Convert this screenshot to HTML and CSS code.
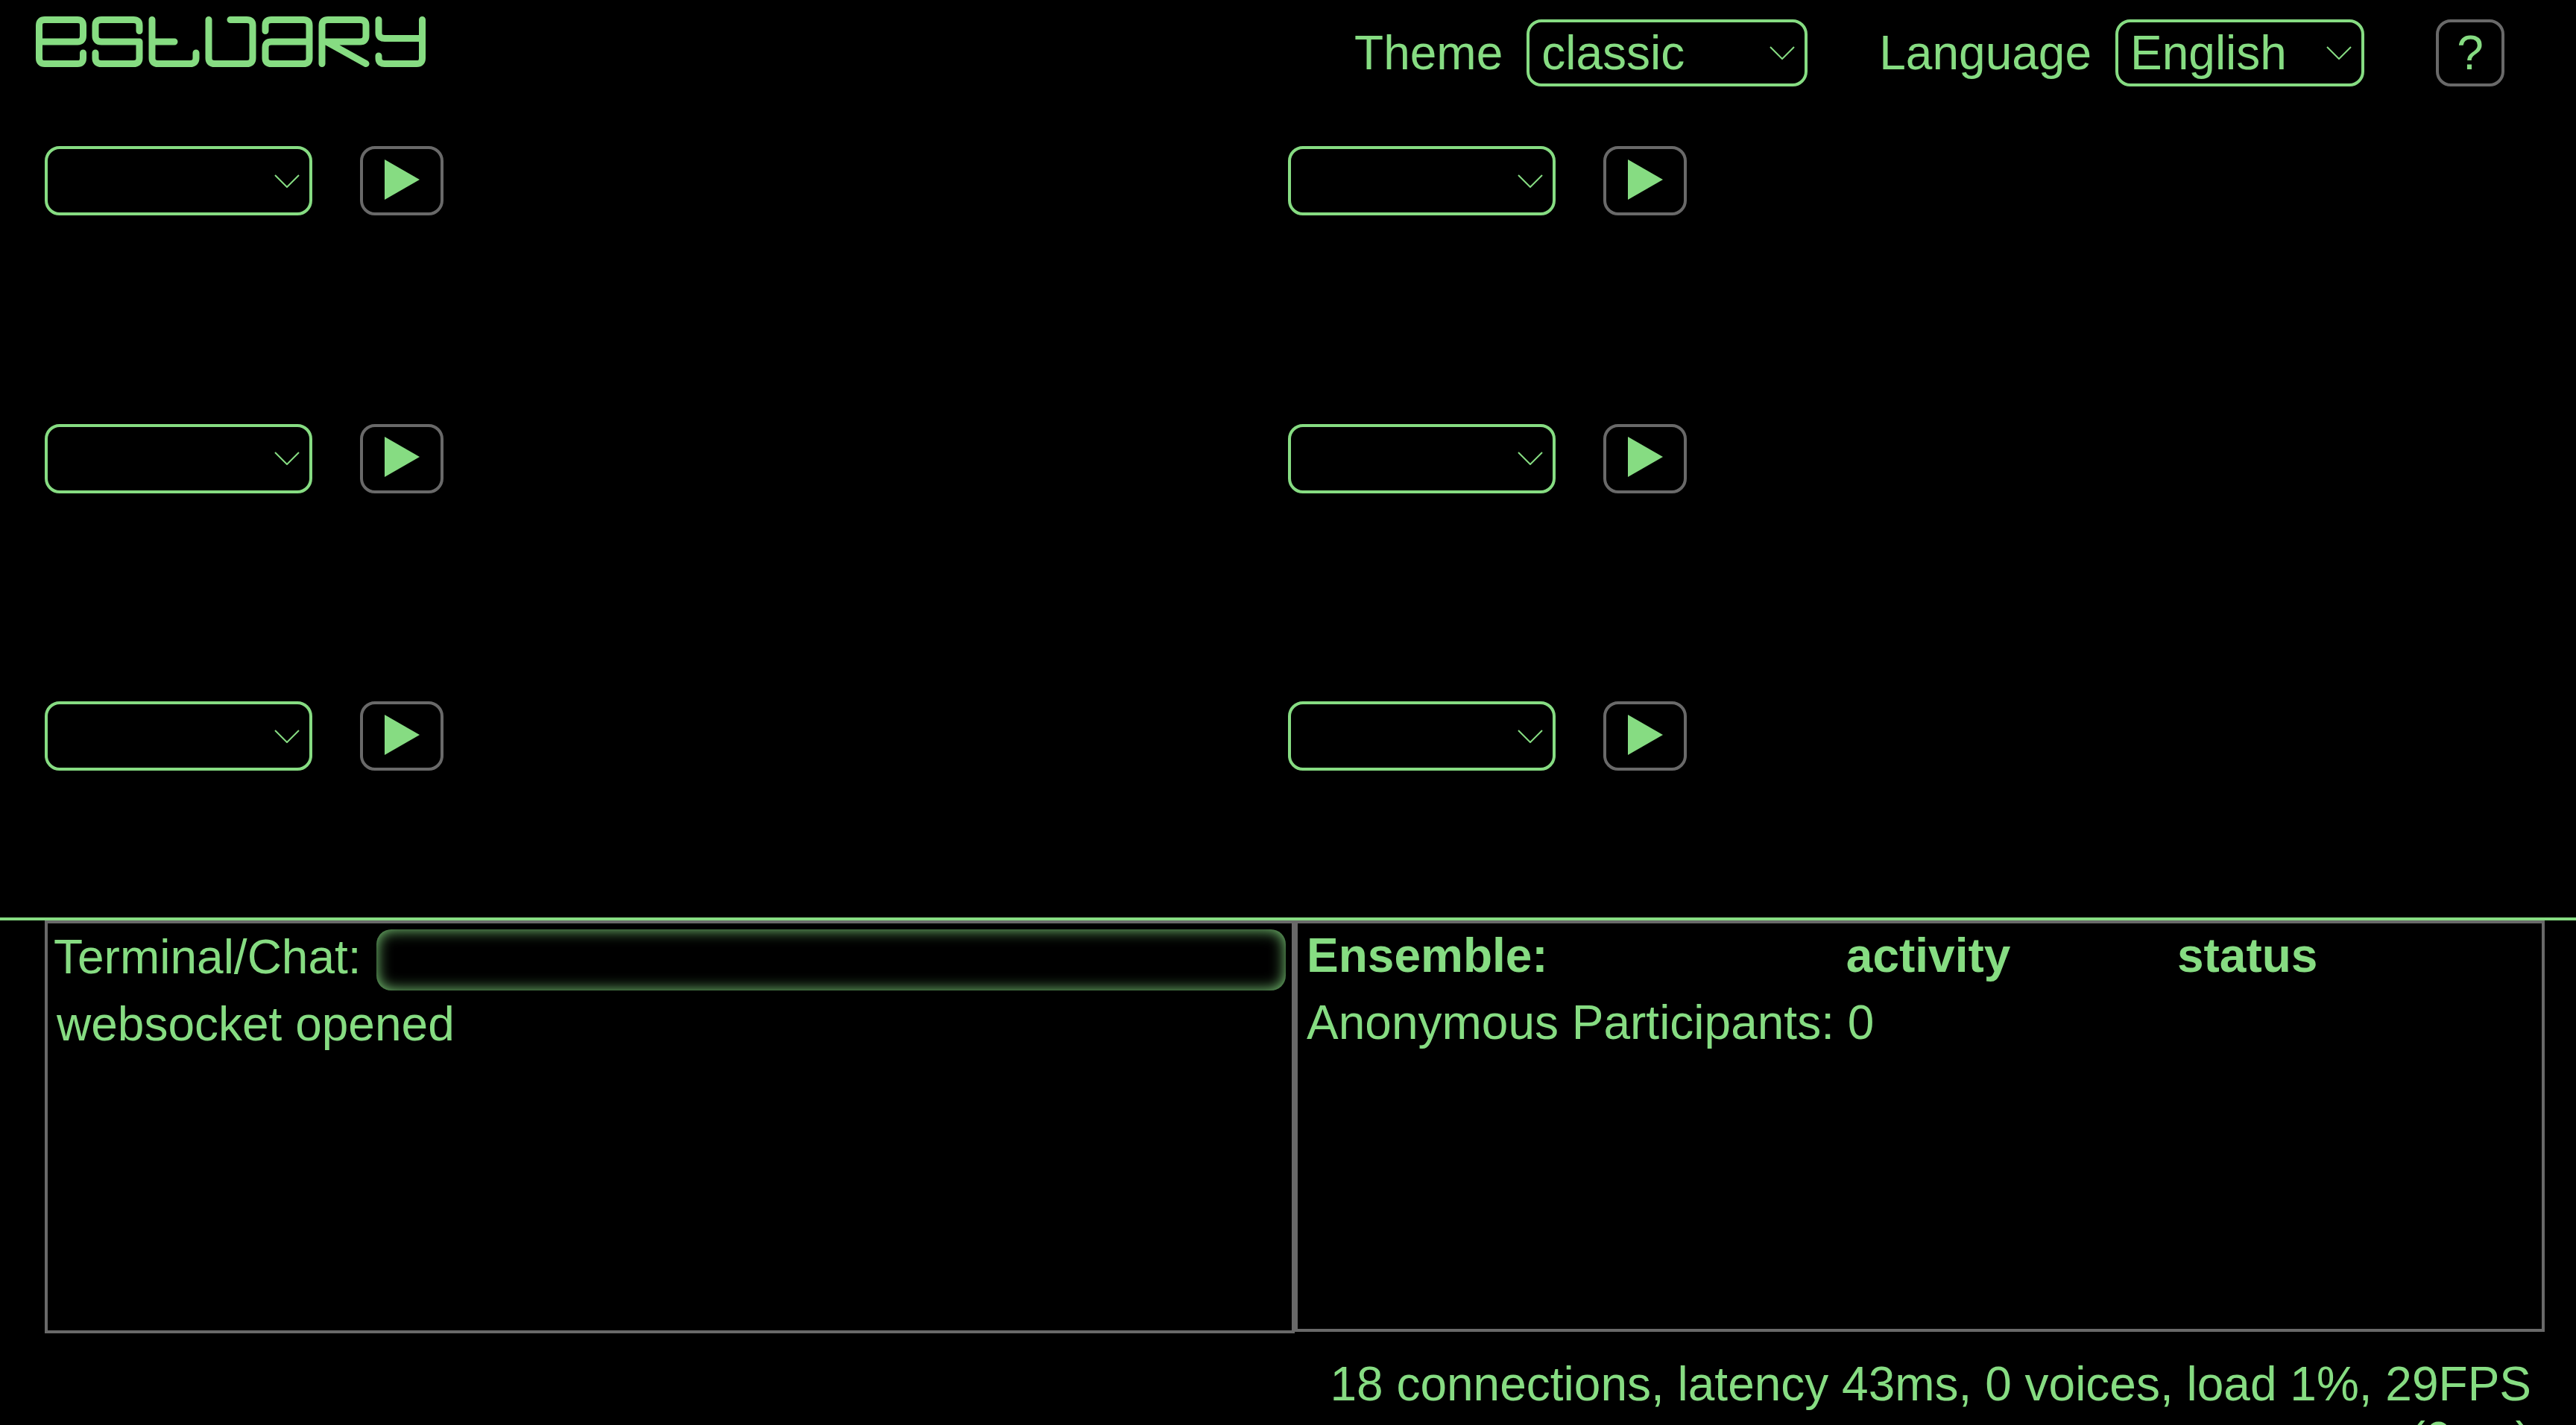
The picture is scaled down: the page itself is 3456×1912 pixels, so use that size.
FILE: index.html
```html
<!DOCTYPE html>
<html lang="en">
<head>
<meta charset="utf-8">
<title>Estuary</title>
<link rel="stylesheet" href="styles.css">
</head>
<body>
<div class="page">
  <header class="header">
    <svg class="logo" viewBox="0 0 523 68" role="img" aria-label="estuary">
      <path d="M4.500 34H56Q63.500 34 63.500 26V12Q63.500 4.500 56 4.500H12Q4.500 4.500 4.500 12V56Q4.500 63.500 12 63.500H56Q63.500 63.500 63.500 56V49"/>
      <path d="M139 19.500V12Q139 4.500 131 4.500H88Q80 4.500 80 12V26Q80 34 88 34H139V56Q139 63.500 131 63.500H88Q80 63.500 80 56V49"/>
      <path d="M156 4.500V56Q156 63.500 164 63.500H207Q215 63.500 215 56V49M156 34H186"/>
      <path d="M232 4.500V56Q232 63.500 240 63.500H283Q291 63.500 291 56V12Q291 4.500 283 4.500H261"/>
      <path d="M308 19.500V12Q308 4.500 316 4.500H359Q367 4.500 367 12V56Q367 63.500 359 63.500H316Q308 63.500 308 56V42Q308 34 316 34H367"/>
      <path d="M384 63.500V12Q384 4.500 392 4.500H435Q443 4.500 443 12V26Q443 34 435 34H384M390 34L443 63.500"/>
      <path d="M460 4.500V22Q460 29.500 468 29.500H518.500M518.500 4.500V56Q518.500 63.500 511 63.500H468Q460 63.500 460 56V53"/>
    </svg>
    <div class="config">
      <div class="field">
        <label for="theme">Theme</label>
        <select id="theme" class="select select-theme"><option>classic</option></select>
      </div>
      <div class="field">
        <label for="language">Language</label>
        <select id="language" class="select select-language"><option>English</option></select>
      </div>
      <button class="button button-help" type="button">?</button>
    </div>
  </header>

  <main class="grid">
    <section class="cell">
      <select class="select select-notation" aria-label="Notation 1"><option></option></select>
      <button class="button button-play" type="button" aria-label="Evaluate 1"><svg class="play" viewBox="0 0 47 54"><path d="M0 0L47 27L0 54Z"/></svg></button>
    </section>
    <section class="cell">
      <select class="select select-notation" aria-label="Notation 2"><option></option></select>
      <button class="button button-play" type="button" aria-label="Evaluate 2"><svg class="play" viewBox="0 0 47 54"><path d="M0 0L47 27L0 54Z"/></svg></button>
    </section>
    <section class="cell">
      <select class="select select-notation" aria-label="Notation 3"><option></option></select>
      <button class="button button-play" type="button" aria-label="Evaluate 3"><svg class="play" viewBox="0 0 47 54"><path d="M0 0L47 27L0 54Z"/></svg></button>
    </section>
    <section class="cell">
      <select class="select select-notation" aria-label="Notation 4"><option></option></select>
      <button class="button button-play" type="button" aria-label="Evaluate 4"><svg class="play" viewBox="0 0 47 54"><path d="M0 0L47 27L0 54Z"/></svg></button>
    </section>
    <section class="cell">
      <select class="select select-notation" aria-label="Notation 5"><option></option></select>
      <button class="button button-play" type="button" aria-label="Evaluate 5"><svg class="play" viewBox="0 0 47 54"><path d="M0 0L47 27L0 54Z"/></svg></button>
    </section>
    <section class="cell">
      <select class="select select-notation" aria-label="Notation 6"><option></option></select>
      <button class="button button-play" type="button" aria-label="Evaluate 6"><svg class="play" viewBox="0 0 47 54"><path d="M0 0L47 27L0 54Z"/></svg></button>
    </section>
  </main>

  <div class="terminal">
    <section class="panel chat">
      <div class="chat-entry">
        <label for="chat">Terminal/Chat:</label>
        <input id="chat" class="chat-input" type="text">
      </div>
      <p class="chat-message">websocket opened</p>
    </section>
    <section class="panel ensemble">
      <table class="ensemble-table">
        <thead>
          <tr><th class="col-name">Ensemble:</th><th class="col-activity">activity</th><th>status</th></tr>
        </thead>
        <tbody>
          <tr><td colspan="3">Anonymous Participants: 0</td></tr>
        </tbody>
      </table>
    </section>
  </div>

  <footer class="footer">
    <div>18 connections, latency 43ms, 0 voices, load 1%, 29FPS</div>
    <div>(0ms)</div>
  </footer>
</div>
</body>
</html>
```
FILE: styles.css
```css
:root {
  --green: #86dc82;
  --grey: #696969;
}

* {
  box-sizing: border-box;
}

body {
  margin: 0;
  background: #000;
  color: var(--green);
  font-family: "Liberation Sans", Arial, sans-serif;
  font-size: 64px;
  line-height: 74px;
}

.page {
  display: flex;
  flex-direction: column;
  height: 100vh;
  overflow: hidden;
}

.header {
  display: flex;
  flex: none;
  justify-content: space-between;
  align-items: flex-start;
  padding: 22px 96px 0 48px;
}

.logo {
  width: 523px;
  height: 68px;
  fill: none;
  stroke: var(--green);
  stroke-width: 9;
  stroke-linecap: round;
  stroke-linejoin: round;
}

.config {
  display: flex;
  gap: 96px;
  padding-top: 4px;
}

.field {
  display: flex;
  align-items: center;
  gap: 32px;
}

.select,
.button {
  height: 90px;
  margin: 0;
  border: 4px solid var(--green);
  border-radius: 20px;
  background: #000;
  color: var(--green);
  font: inherit;
}

.select {
  appearance: none;
  padding: 0 16px;
  background: url("data:image/svg+xml,%3Csvg xmlns='http://www.w3.org/2000/svg' viewBox='0 0 34 18'%3E%3Cpath d='M1 1L17 17L33 1' fill='none' stroke='%2386dc82' stroke-width='2'/%3E%3C/svg%3E") no-repeat right 13px center / 34px 18px;
}

.select-theme {
  width: 377px;
}

.select-language {
  width: 334px;
}

.button {
  padding: 0;
  border-color: var(--grey);
  text-align: center;
}

.button-help {
  width: 92px;
}

.grid {
  display: grid;
  flex: 1;
  grid-template-columns: 1fr 1fr;
  grid-template-rows: 1fr 1fr 290px;
  padding: 80px 60px 0;
  min-height: 0;
}

.cell {
  display: flex;
  align-items: flex-start;
  gap: 64px;
}

.select-notation {
  width: 359px;
  height: 93px;
}

.button-play {
  display: flex;
  align-items: center;
  justify-content: center;
  width: 112px;
  height: 93px;
  padding-bottom: 4px;
}

.play {
  width: 47px;
  height: 54px;
  fill: var(--green);
}

.terminal {
  display: grid;
  flex: none;
  grid-template-columns: 1fr 1fr;
  align-items: start;
  padding: 0 42px 0 60px;
  border-top: 4px solid var(--green);
}

.panel {
  min-width: 0;
  height: 554px;
  border: 4px solid var(--grey);
}

.chat {
  padding: 8px;
}

.chat-entry {
  display: flex;
  align-items: flex-start;
  gap: 20px;
}

.chat-input {
  flex: 1;
  min-width: 0;
  height: 82px;
  padding: 0 16px;
  border: 0;
  border-radius: 20px;
  background: #000;
  box-shadow: inset 0 0 20px var(--green);
  color: var(--green);
  font: inherit;
}

.chat-message {
  margin: 8px 4px;
}

.ensemble {
  height: 552px;
  padding: 6px 12px;
}

.ensemble-table {
  width: 100%;
  table-layout: fixed;
  border-collapse: collapse;
}

.ensemble-table th,
.ensemble-table td {
  padding: 0 0 16px;
  text-align: left;
}

.col-name {
  width: 44%;
}

.col-activity {
  width: 27%;
}

.footer {
  flex: none;
  height: 123px;
  padding: 31px 60px 0;
  text-align: right;
}
```
